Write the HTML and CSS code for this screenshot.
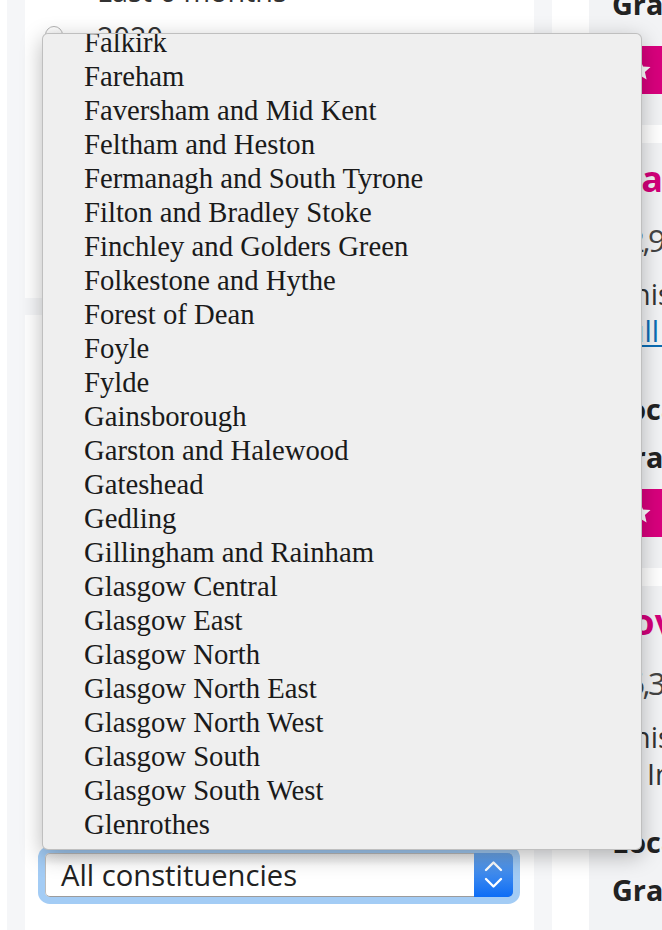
FILE: index.html
```html
<!DOCTYPE html>
<html lang="en">
<head>
<meta charset="utf-8">
<title>Grants by constituency</title>
<link rel="stylesheet" href="styles.css">
</head>
<body>
<div class="page">
  <div class="filters">
    <section class="panel panel-date">
      <h2 class="panel-title">Date awarded</h2>
      <ul class="radio-list">
        <li class="radio-row"><span class="radio"></span>Any time</li>
        <li class="radio-row"><span class="radio"></span>Last week</li>
        <li class="radio-row"><span class="radio"></span>Last month</li>
        <li class="radio-row"><span class="radio"></span>Last 3 months</li>
        <li class="radio-row"><span class="radio"></span>Last 6 months</li>
        <li class="radio-row"><span class="radio"></span>2020</li>
        <li class="radio-row"><span class="radio"></span>2019</li>
        <li class="radio-row"><span class="radio"></span>2018</li>
        <li class="radio-row"><span class="radio"></span>2017</li>
        <li class="radio-row"><span class="radio"></span>2016</li>
        <li class="radio-row"><span class="radio"></span>2015</li>
      </ul>
    </section>
    <section class="panel panel-area">
      <h2 class="panel-title">Location</h2>
      <div class="field">
        <span class="field-label">Region</span>
        <div class="select"><span class="select-text">All regions</span><span class="select-btn"><svg width="39" height="42" viewBox="0 0 39 42"><polyline points="12,16 19.5,8.5 27,16" /><polyline points="12,25 19.5,32.5 27,25" /></svg></span></div>
      </div>
      <div class="field">
        <span class="field-label">Local authority</span>
        <div class="select"><span class="select-text">All local authorities</span><span class="select-btn"><svg width="39" height="42" viewBox="0 0 39 42"><polyline points="12,16 19.5,8.5 27,16" /><polyline points="12,25 19.5,32.5 27,25" /></svg></span></div>
      </div>
      <div class="field">
        <span class="field-label">Ward</span>
        <div class="select"><span class="select-text">All wards</span><span class="select-btn"><svg width="39" height="42" viewBox="0 0 39 42"><polyline points="12,16 19.5,8.5 27,16" /><polyline points="12,25 19.5,32.5 27,25" /></svg></span></div>
      </div>
      <div class="field field-last">
        <span class="field-label">Constituency</span>
        <p class="field-hint">Westminster constituency</p>
        <div class="select select-focused"><span class="select-text">All constituencies</span><span class="select-btn"><svg width="39" height="42" viewBox="0 0 39 42"><polyline points="12,16 19.5,8.5 27,16" /><polyline points="12,25 19.5,32.5 27,25" /></svg></span></div>
      </div>
      <p class="panel-link">Clear all location filters</p>
    </section>
  </div>

  <main class="results">
    <article class="grant grant-first grant-has-link">
      <h3 class="grant-title">Springburn Youth Project</h3>
      <p class="grant-amount">£1,500</p>
      <p class="grant-desc">Unison branch support for summer activities<br><span class="grant-link">Full details</span></p>
      <ul class="grant-meta">
        <li>Local authority: <span class="meta-value">Glasgow City</span></li>
        <li>Grant programme: <span class="meta-value">Awards for All</span></li>
      </ul>
      <div class="grant-btn"><svg class="star" width="24" height="24" viewBox="0 0 24 24"><path d="M12 1.5l3.1 6.9 7.4.7-5.6 5 1.7 7.4L12 17.6l-6.6 3.9 1.7-7.4-5.6-5 7.4-.7z"/></svg><span>Save this grant</span></div>
    </article>

    <article class="grant grant-has-link">
      <h3 class="grant-title">National Piping Centre</h3>
      <p class="grant-amount">£2,945</p>
      <p class="grant-desc">Unison branch funding for a new growing space<br><span class="grant-link">Full details</span></p>
      <ul class="grant-meta">
        <li>Local authority: <span class="meta-value">Glasgow City</span></li>
        <li>Grant programme: <span class="meta-value">Awards for All</span></li>
      </ul>
      <div class="grant-btn"><svg class="star" width="24" height="24" viewBox="0 0 24 24"><path d="M12 1.5l3.1 6.9 7.4.7-5.6 5 1.7 7.4L12 17.6l-6.6 3.9 1.7-7.4-5.6-5 7.4-.7z"/></svg><span>Save this grant</span></div>
    </article>

    <article class="grant grant-last">
      <h3 class="grant-title">Love Learning Glasgow</h3>
      <p class="grant-amount">£6,350</p>
      <p class="grant-desc">Unison members' welfare fund towards trips<br>to Inverclyde and the Clyde coast</p>
      <ul class="grant-meta">
        <li>Local authority: <span class="meta-value">Glasgow City</span></li>
        <li>Grant programme: <span class="meta-value">Awards for All</span></li>
      </ul>
      <div class="grant-btn"><svg class="star" width="24" height="24" viewBox="0 0 24 24"><path d="M12 1.5l3.1 6.9 7.4.7-5.6 5 1.7 7.4L12 17.6l-6.6 3.9 1.7-7.4-5.6-5 7.4-.7z"/></svg><span>Save this grant</span></div>
    </article>
  </main>
</div>

<div class="dropdown">
  <ul class="dropdown-list">
    <li>Falkirk</li>
    <li>Fareham</li>
    <li>Faversham and Mid Kent</li>
    <li>Feltham and Heston</li>
    <li>Fermanagh and South Tyrone</li>
    <li>Filton and Bradley Stoke</li>
    <li>Finchley and Golders Green</li>
    <li>Folkestone and Hythe</li>
    <li>Forest of Dean</li>
    <li>Foyle</li>
    <li>Fylde</li>
    <li>Gainsborough</li>
    <li>Garston and Halewood</li>
    <li>Gateshead</li>
    <li>Gedling</li>
    <li>Gillingham and Rainham</li>
    <li>Glasgow Central</li>
    <li>Glasgow East</li>
    <li>Glasgow North</li>
    <li>Glasgow North East</li>
    <li>Glasgow North West</li>
    <li>Glasgow South</li>
    <li>Glasgow South West</li>
    <li>Glenrothes</li>
  </ul>
</div>
</body>
</html>
```

FILE: styles.css
```css
* { box-sizing: border-box; }

html, body {
  margin: 0;
  padding: 0;
  overflow: hidden;
}

body {
  display: flow-root;
  width: 662px;
  height: 930px;
  background: #fff;
  font-family: "Open Sans", "Liberation Sans", sans-serif;
  font-size: 28.8px;
  color: #222;
}

.page {
  display: flex;
  align-items: flex-start;
  margin-top: -310px;
}

/* ---------- left filter column ---------- */
.filters {
  flex: 0 0 545px;
  margin-left: 7px;
  padding: 18px 18px 0;
  background: #f5f6f8;
  display: flex;
  flex-direction: column;
  gap: 17px;
}

.panel { background: #fff; }

.panel-date { padding: 12px 21px 8px 20px; }

.panel-title {
  margin: 0 0 24px;
  font-size: 32px;
  line-height: 40px;
  font-weight: 700;
}

.radio-list { list-style: none; margin: 0; padding: 0; }

.radio-row {
  display: flex;
  align-items: center;
  height: 46px;
  line-height: 46px;
  color: #333;
}

.radio {
  flex: none;
  width: 18px;
  height: 18px;
  margin: -4px 34px 0 0;
  border-radius: 50%;
  border: 1px solid #b3b3b3;
  background: linear-gradient(#ffffff, #ebebeb);
}

.panel-area { padding: 20px 21px 40px 20px; }

.field { margin-bottom: 28px; }
.field-last { margin-bottom: 0; }

.field-label {
  display: block;
  font-weight: 700;
  line-height: 40px;
}

.field-hint {
  margin: 0 0 14px;
  line-height: 40px;
  color: #555;
}

.select {
  margin-top: 8px;
  display: flex;
  height: 44px;
  border: 1px solid #bcbcbc;
  border-bottom-color: #9c9c9c;
  border-radius: 5px;
  background: linear-gradient(#e9e9e9, #ffffff 28%);
}

.field-hint + .select { margin-top: 0; }

.select-focused { box-shadow: 0 0 0 7px #a3ccf5; }

.select-text {
  flex: 1;
  padding-left: 15px;
  font-size: 29.2px;
  line-height: 42px;
  color: #222;
  white-space: nowrap;
}

.select-btn {
  flex: none;
  width: 39px;
  margin: -1px -1px -1px 0;
  border-radius: 0 5px 5px 0;
  background: linear-gradient(#6ba5e7, #0d6df6);
  display: flex;
  align-items: center;
  justify-content: center;
}

.select-btn svg polyline {
  fill: none;
  stroke: #fff;
  stroke-width: 2.4;
  stroke-linecap: round;
  stroke-linejoin: round;
}

.panel-link {
  margin: 27px 0 0;
  line-height: 40px;
  color: #a9c6e2;
}

/* ---------- right results column ---------- */
.results {
  flex: 0 0 560px;
  background: #fff;
  padding-left: 37px;
  display: flex;
  flex-direction: column;
  gap: 18px;
}

.grant {
  background: #f2f3f5;
  padding: 14px 23px 31px;
}

.grant-title {
  margin: 0;
  font-size: 36px;
  line-height: 44px;
  font-weight: 700;
  color: #d3007a;
  white-space: nowrap;
}

.grant-amount {
  margin: 17.6px 0 0;
  font-size: 31px;
  line-height: 44px;
  letter-spacing: -2.5px;
  color: #444;
}

.grant-desc {
  margin: 12.7px 0 0;
  line-height: 37px;
  color: #333;
  white-space: nowrap;
}

.grant-link {
  color: #0b6cb3;
  text-decoration: underline;
  text-underline-offset: 3px;
}

.grant-meta {
  margin: 25.5px 0 0;
  padding: 0;
  list-style: none;
}

.grant-has-link .grant-meta { margin-top: 35.5px; }

.grant-meta li {
  line-height: 48px;
  font-weight: 700;
  white-space: nowrap;
}

.meta-value { font-weight: 400; }

.grant-btn {
  margin-top: 8.2px;
  height: 48px;
  padding-left: 16px;
  display: flex;
  align-items: center;
  gap: 12px;
  background: #d9007d;
  color: #fff;
  font-weight: 700;
}

.grant-first .grant-btn { margin-top: 18px; }
.grant-last .grant-btn { margin-top: 40px; }

.star { flex: none; fill: #fff; }

/* ---------- open native-style dropdown ---------- */
.dropdown {
  position: absolute;
  top: 33px;
  left: 42px;
  width: 600px;
  height: 817px;
  background: #efefef;
  border: 1px solid rgba(0, 0, 0, 0.2);
  border-radius: 6px;
  box-shadow: 0 6px 22px rgba(0, 0, 0, 0.28);
  overflow: hidden;
}

.dropdown-list {
  list-style: none;
  margin: -9px 0 0;
  padding: 0;
}

.dropdown-list li {
  padding-left: 41px;
  font-family: "Liberation Serif", "Times New Roman", serif;
  font-size: 28.7px;
  line-height: 34px;
  color: #1a1a1a;
  white-space: nowrap;
}
```
